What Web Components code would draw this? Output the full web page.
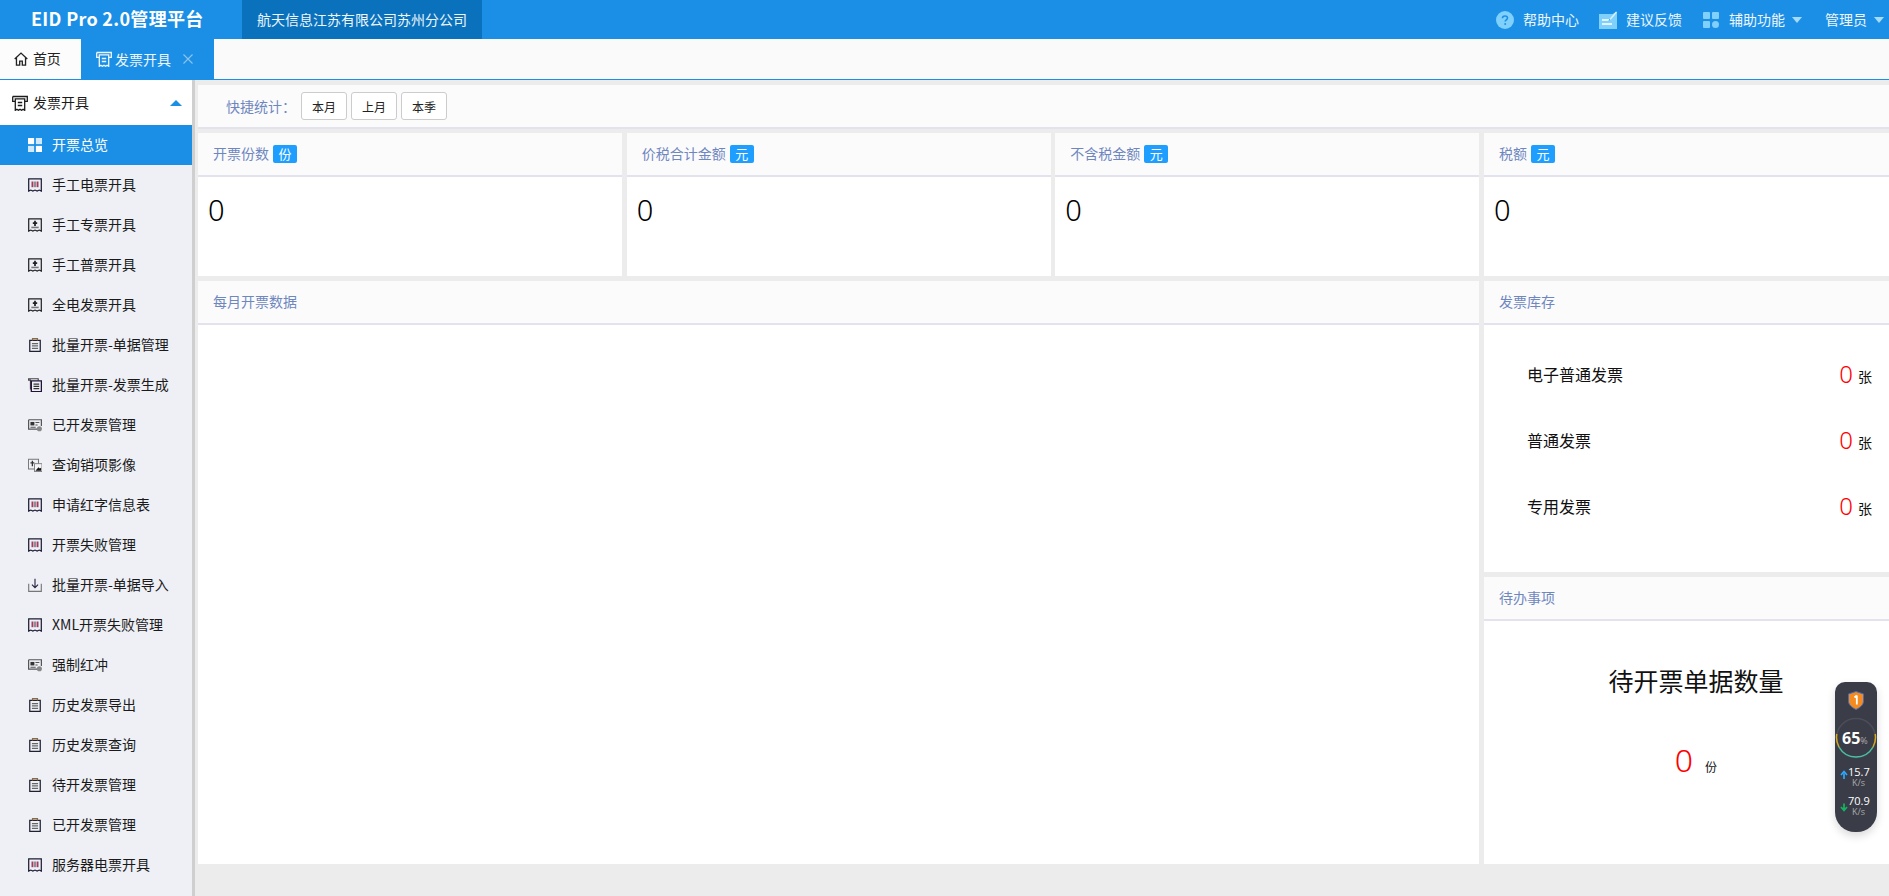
<!DOCTYPE html>
<html lang="zh">
<head>
<meta charset="utf-8">
<title>EID Pro 2.0管理平台</title>
<style>
html,body{margin:0;height:100%;overflow:hidden;}
body{font-family:"Noto Sans CJK SC","Noto Sans",sans-serif;font-size:14px;color:#000;background:#ececec;}
eid-app{height:100vh;}
</style>
</head>
<body>
<eid-app>
  <eid-topbar slot="top" title-text="EID Pro 2.0管理平台" company="航天信息江苏有限公司苏州分公司"></eid-topbar>
  <eid-tabs slot="tabs"></eid-tabs>
  <eid-sidebar slot="side" heading="发票开具">
    <eid-nav-item icon="grid" active>开票总览</eid-nav-item>
    <eid-nav-item icon="bar">手工电票开具</eid-nav-item>
    <eid-nav-item icon="stamp">手工专票开具</eid-nav-item>
    <eid-nav-item icon="stamp">手工普票开具</eid-nav-item>
    <eid-nav-item icon="stamp">全电发票开具</eid-nav-item>
    <eid-nav-item icon="clip">批量开票-单据管理</eid-nav-item>
    <eid-nav-item icon="copy">批量开票-发票生成</eid-nav-item>
    <eid-nav-item icon="card">已开发票管理</eid-nav-item>
    <eid-nav-item icon="image">查询销项影像</eid-nav-item>
    <eid-nav-item icon="bar">申请红字信息表</eid-nav-item>
    <eid-nav-item icon="bar">开票失败管理</eid-nav-item>
    <eid-nav-item icon="download">批量开票-单据导入</eid-nav-item>
    <eid-nav-item icon="bar">XML开票失败管理</eid-nav-item>
    <eid-nav-item icon="card">强制红冲</eid-nav-item>
    <eid-nav-item icon="clip">历史发票导出</eid-nav-item>
    <eid-nav-item icon="clip">历史发票查询</eid-nav-item>
    <eid-nav-item icon="clip">待开发票管理</eid-nav-item>
    <eid-nav-item icon="clip">已开发票管理</eid-nav-item>
    <eid-nav-item icon="bar">服务器电票开具</eid-nav-item>
  </eid-sidebar>
  <eid-dashboard slot="main"></eid-dashboard>
  <eid-speed slot="float"></eid-speed>
</eid-app>

<script>
// 图标都放这里，按名字取
const ICONS = {
  home:`<path d="M.8 8 8 1.200 15.200 8M2.800 6.500V15h3.700v-4.500h3V15h3.700V6.500" fill="none" stroke="currentColor" stroke-width="1.500"/>`,
  ticket:`<path d="M.7 1.500h14.600v4.800h-2.600M.7 1.500v4.800h2.600M3.300 3.800v11.500l1.600-1.100 1.500 1.100 1.600-1.100 1.600 1.100 1.500-1.100 1.600 1.100V3.800zM5.800 7.500h4.400M5.800 10.500h4.400" fill="none" stroke="currentColor" stroke-width="1.300"/>`,
  grid:`<g fill="currentColor"><rect x="0" y="0" width="7" height="7"/><rect x="9" y="0" width="7" height="7" opacity=".8"/><rect x="0" y="9" width="7" height="7" opacity=".8"/><rect x="9" y="9" width="7" height="7"/></g>`,
  bar:`<path d="M.8 1h14.400v14l-2.400-1.200-2.400 1.200-2.400-1.200-2.400 1.200-2.400-1.200-2.400 1.200z" fill="none" stroke="#1b1b35" stroke-width="1.400"/><rect x="4" y="4" width="2.200" height="6.500" fill="#a33b5c"/><rect x="6.900" y="4" width="2.200" height="6.500" fill="#8a8a94"/><rect x="9.800" y="4" width="2.200" height="6.500" fill="#a33b5c"/>`,
  stamp:`<path d="M.8 1h14.400v14l-2.400-1.200-2.400 1.200-2.400-1.200-2.400 1.200-2.400-1.200-2.400 1.200z" fill="none" stroke="#222" stroke-width="1.400"/><path d="M8 3.200v5.800M5.500 5.800h5" stroke="#222" stroke-width="2"/><path d="M3.800 10.800h8.400" stroke="#777" stroke-width="1.800"/>`,
  clip:`<path d="M2 2.800h12v12.500H2z" fill="none" stroke="#1f2030" stroke-width="1.400"/><path d="M5.200 2.800V.8h5.600v2" fill="none" stroke="#8b6a45" stroke-width="1.400"/><path d="M4.500 6.500h7M4.500 9h7M4.500 11.800h7" stroke="#666" stroke-width="1.500"/>`,
  copy:`<path d="M2.800 13V2.500H.7V.8h11v2" fill="none" stroke="#444" stroke-width="1.300"/><path d="M3.800 3.300h11.500v12.200H3.800z" fill="none" stroke="#241038" stroke-width="1.500"/><path d="M6.300 7h6.500M6.300 9.500h6.500M6.300 12.200h6.500" stroke="#333" stroke-width="1.300"/>`,
  card:`<path d="M.7 2h14.600v7M15 12.800H.7V2" fill="none" stroke="#555" stroke-width="1.400"/><rect x="2.800" y="4.500" width="4.500" height="4" fill="#333"/><path d="M8.500 5.200h4.500M8.500 8h2.500M2.800 10.600h6" stroke="#555" stroke-width="1.300"/><circle cx="13" cy="12.300" r="2.900" fill="#888"/>`,
  image:`<path d="M.5 1.500h11.500v11H.5z" fill="none" stroke="#777" stroke-width="1.200"/><path d="M5 3v6.500M2.800 5.500h4.400" stroke="#333" stroke-width="1.500"/><rect x="7.500" y="6.500" width="8.500" height="9" fill="#f5f5f8" stroke="#777"/><path d="M8.500 14.500l3.500-4 1.500 1.500 1.500-1v3.500z" fill="#111"/>`,
  download:`<path d="M.8 6.500v8.800h14.400V6.500" fill="none" stroke="#777" stroke-width="1.300"/><path d="M8 .8v10M4.500 7.500 8 11l3.500-3.500" fill="none" stroke="#2a2540" stroke-width="1.300"/>`,
  help:`<circle cx="9" cy="9" r="9" fill="#7fd0fa"/><path d="M6.500 7.200C6.500 5.700 7.600 5 9 5s2.500.8 2.500 2.100c0 1.800-2.300 1.700-2.300 3.400" fill="none" stroke="#1b8fe6" stroke-width="1.600"/><circle cx="9.200" cy="13" r="1" fill="#1b8fe6"/>`,
  note:`<path d="M0 3h13.500L18 .5V18H0z" fill="#7fd0fa"/><path d="M3 9h7M3 13h10" stroke="#fff" stroke-width="1.300"/><path d="M10 9.500 17 1.500" stroke="#1b8fe6" stroke-width="1"/><path d="M11 8.500 17.500 1" stroke="#d9f2ff" stroke-width="1.500"/>`,
  apps:`<g fill="#7fd0fa"><rect x="0" y="0" width="7" height="7" rx="1"/><rect x="9" y="0" width="7" height="7" rx="1"/><rect x="0" y="9" width="7" height="7" rx="1"/><circle cx="12.500" cy="12.500" r="3.500"/></g>`
};

class EidIcon extends HTMLElement{
  connectedCallback(){
    const size = this.getAttribute("size") || 16;
    const box = this.getAttribute("box") || 16;
    this.attachShadow({mode:"open"}).innerHTML = `
      <style>:host{display:inline-flex;flex:none;width:${size}px;height:${size}px;}svg{display:block;}</style>
      <svg width="${size}" height="${size}" viewBox="0 0 ${box} ${box}">${ICONS[this.getAttribute("name")]||""}</svg>`;
  }
}

class EidApp extends HTMLElement{
  constructor(){
    super();
    this.attachShadow({mode:"open"}).innerHTML = `
      <style>
        :host{display:grid;grid-template-columns:195px 1fr;grid-template-rows:39px 41px 1fr;position:relative;overflow:hidden;}
        .top{grid-column:1/3;display:block;}
        .tabs{grid-column:1/3;display:block;}
        .side{min-height:0;overflow:hidden;}
        .main{min-width:0;min-height:0;overflow:hidden;}
      </style>
      <div class="top"><slot name="top"></slot></div>
      <div class="tabs"><slot name="tabs"></slot></div>
      <div class="side"><slot name="side"></slot></div>
      <div class="main"><slot name="main"></slot></div>
      <slot name="float"></slot>`;
  }
}

class EidTopbar extends HTMLElement{
  connectedCallback(){
    this.attachShadow({mode:"open"}).innerHTML = `
      <style>
        :host{display:flex;height:39px;background:#1b8fe6;color:#fff;align-items:stretch;}
        .logo{width:242px;box-sizing:border-box;padding-left:31px;font-size:18px;font-weight:700;line-height:37px;letter-spacing:.3px;white-space:nowrap;}
        .org{background:#0a72bc;padding:0 15px;line-height:38px;width:210px;white-space:nowrap;color:#eef6fc;}
        .right{margin-left:auto;display:flex;align-items:center;}
        .it{display:flex;align-items:center;white-space:nowrap;line-height:37px;height:39px;color:#eef6fc;}
        .it eid-icon{margin-right:9px;}
        .caret{width:0;height:0;border:5.500px solid transparent;border-top:6px solid #a5dcf9;border-bottom:0;margin-left:7px;}
        .b{margin-left:20px;}.c{margin-left:21px;}.d{margin-left:23px;margin-right:5px;}
        .c eid-icon{margin-right:10px;}
      </style>
      <div class="logo">${this.getAttribute("title-text")}</div>
      <div class="org">${this.getAttribute("company")}</div>
      <div class="right">
        <div class="it a"><eid-icon name="help" size="18" box="18"></eid-icon>帮助中心</div>
        <div class="it b"><eid-icon name="note" size="18" box="18"></eid-icon>建议反馈</div>
        <div class="it c"><eid-icon name="apps" size="16"></eid-icon>辅助功能<span class="caret"></span></div>
        <div class="it d">管理员<span class="caret"></span></div>
      </div>`;
  }
}

class EidTabs extends HTMLElement{
  connectedCallback(){
    this.attachShadow({mode:"open"}).innerHTML = `
      <style>
        :host{display:flex;height:41px;box-sizing:border-box;background:#fafafa;border-bottom:1px solid #1b8fe6;}
        .tab{display:flex;align-items:center;line-height:20px;white-space:nowrap;}
        .home{width:81px;box-sizing:border-box;padding-left:14px;color:#222;background:#fcfcfc;}
        .home eid-icon{margin-right:5px;}
        .home span{padding-bottom:2px;letter-spacing:-.3px;}
        .on{width:133px;box-sizing:border-box;padding-left:15px;background:#1b8fe6;color:#eef6fc;}
        .on eid-icon{margin-right:3px;}
        .x{margin-left:12px;width:10px;height:10px;}
      </style>
      <div class="tab home"><eid-icon name="home" size="14"></eid-icon><span>首页</span></div>
      <div class="tab on"><eid-icon name="ticket" size="16"></eid-icon>发票开具
        <svg class="x" viewBox="0 0 10 10"><path d="M.5.500l9 9M9.500.500l-9 9" stroke="#8cc4ee" stroke-width="1.100"/></svg></div>`;
  }
}

class EidSidebar extends HTMLElement{
  connectedCallback(){
    this.attachShadow({mode:"open"}).innerHTML = `
      <style>
        :host{display:block;height:100%;box-sizing:border-box;background:#eef0f6;border-right:3px solid #cfcfcf;}
        .head{display:flex;align-items:center;height:45px;background:#fff;padding-left:12px;color:#1c1c1c;line-height:20px;}
        .head span.t{position:relative;top:-1px;}
        .head eid-icon{margin-right:5px;}
        .tri{margin-left:auto;margin-right:10px;width:0;height:0;border:6px solid transparent;border-bottom:6px solid #1b8fe6;border-top:0;}
      </style>
      <div class="head"><eid-icon name="ticket" size="16"></eid-icon><span class="t">${this.getAttribute("heading")}</span><span class="tri"></span></div>
      <slot></slot>`;
  }
}

class EidNavItem extends HTMLElement{
  connectedCallback(){
    this.attachShadow({mode:"open"}).innerHTML = `
      <style>
        :host{display:flex;align-items:center;height:40px;padding-left:28px;color:#1a1a1a;white-space:nowrap;}
        :host([active]){background:#1b8fe6;color:#fff;}
        eid-icon{margin-right:10px;width:14px;height:14px;}
        .t{padding-bottom:2px;}
      </style>
      <eid-icon name="${this.getAttribute("icon")}" size="14"></eid-icon><span class="t"><slot></slot></span>`;
  }
}

class EidPanel extends HTMLElement{
  connectedCallback(){
    const unit = this.getAttribute("unit");
    this.attachShadow({mode:"open"}).innerHTML = `
      <style>
        :host{display:flex;flex-direction:column;background:#fff;min-width:0;min-height:0;}
        .h{display:flex;align-items:center;flex:none;height:42px;background:#fbfbfc;border-bottom:2px solid #e3e3f0;padding-left:15px;color:#6f87bf;white-space:nowrap;}
        .t{padding-bottom:2px;}
        .u{margin-left:4px;background:#1e9fff;color:#fff;border-radius:2px;font-size:13px;width:24px;height:18px;line-height:17px;text-align:center;}
        .b{flex:1;min-height:0;}
      </style>
      <div class="h"><span class="t">${this.getAttribute("heading")}</span>${unit?`<span class="u">${unit}</span>`:""}</div>
      <div class="b"><slot></slot></div>`;
  }
}

class EidStat extends HTMLElement{
  connectedCallback(){
    this.attachShadow({mode:"open"}).innerHTML = `
      <style>:host{display:block;padding:11px 0 0 10px;font-size:29px;line-height:44px;color:#000;font-family:"Noto Sans",sans-serif;font-weight:300;}</style>
      <slot></slot>`;
  }
}

class EidStockRow extends HTMLElement{
  connectedCallback(){
    this.attachShadow({mode:"open"}).innerHTML = `
      <style>
        :host{display:flex;align-items:center;height:66px;padding:0 36px 0 43px;font-size:16px;color:#111;}
        .n{margin-left:auto;font-size:24px;line-height:30px;color:#f00;font-family:"Noto Sans",sans-serif;font-weight:300;}
        .z{margin-left:5px;font-size:14px;position:relative;top:2px;}
      </style>
      <slot></slot><span class="n">${this.getAttribute("count")}</span><span class="z">张</span>`;
  }
}

class EidDashboard extends HTMLElement{
  connectedCallback(){
    this.attachShadow({mode:"open"}).innerHTML = `
      <style>
        :host{display:block;height:100%;box-sizing:border-box;padding:5px 0 0 3px;overflow:hidden;}
        .quick{display:flex;align-items:center;height:42px;background:#fbfbfc;border-bottom:2px solid #e3e3ee;margin-bottom:4px;padding-left:28px;color:#6f87bf;}
        .quick span{margin-right:5px;}
        button{width:46px;height:28px;margin-right:4px;padding:0;background:#fff;border:1px solid #ccc;border-radius:3px;font:12px "Noto Sans CJK SC",sans-serif;color:#222;}
        .grid{display:grid;width:1710px;grid-template-columns:repeat(4,424px);column-gap:4.670px;row-gap:5px;grid-template-rows:143px 583px;}
        .wide{grid-column:1/4;}
        .stack{display:flex;flex-direction:column;gap:5px;min-height:0;}
        .stock{height:291px;flex:none;}
        .stock .pad{padding-top:16px;}
        .todo{flex:1;}
        .big{text-align:center;font-size:25px;line-height:36px;padding-top:41px;color:#111;}
        .cnt{text-align:center;margin-top:40px;line-height:44px;font-size:12px;color:#111;}
        .cnt b{font:300 32px "Noto Sans",sans-serif;color:#f00;margin-right:12px;}
      </style>
      <div class="quick"><span>快捷统计：</span><button>本月</button><button>上月</button><button>本季</button></div>
      <div class="grid">
        <eid-panel heading="开票份数" unit="份"><eid-stat>0</eid-stat></eid-panel>
        <eid-panel heading="价税合计金额" unit="元"><eid-stat>0</eid-stat></eid-panel>
        <eid-panel heading="不含税金额" unit="元"><eid-stat>0</eid-stat></eid-panel>
        <eid-panel heading="税额" unit="元"><eid-stat>0</eid-stat></eid-panel>
        <eid-panel class="wide" heading="每月开票数据"></eid-panel>
        <div class="stack">
          <eid-panel class="stock" heading="发票库存">
            <div class="pad">
              <eid-stock-row count="0">电子普通发票</eid-stock-row>
              <eid-stock-row count="0">普通发票</eid-stock-row>
              <eid-stock-row count="0">专用发票</eid-stock-row>
            </div>
          </eid-panel>
          <eid-panel class="todo" heading="待办事项">
            <div class="big">待开票单据数量</div>
            <div class="cnt"><b>0</b>份</div>
          </eid-panel>
        </div>
      </div>`;
  }
}

// 右下角悬浮的测速小窗，盖在内容上面
class EidSpeed extends HTMLElement{
  connectedCallback(){
    this.attachShadow({mode:"open"}).innerHTML = `
      <style>
        :host{position:absolute;left:1835px;top:682px;width:42px;height:150px;background:#3a3d47;border-radius:10px 10px 20px 20px;box-shadow:0 4px 8px rgba(0,0,0,.15);color:#fff;font-family:"Open Sans","Noto Sans",sans-serif;}
        svg{position:absolute;left:0;top:0;}
        .p{position:absolute;left:7px;top:46px;font-size:16px;font-weight:700;line-height:20px;white-space:nowrap;}
        .p small{font-size:9px;font-weight:400;color:#aaa;}
        .v{position:absolute;left:13px;font-size:11px;line-height:10px;white-space:nowrap;}
        .k{position:absolute;left:17px;font-size:9px;line-height:9px;color:#aaa;white-space:nowrap;}
      </style>
      <svg width="42" height="150" viewBox="0 0 42 150">
        <path d="M13.500 12l7.500-2.500 7.500 2.500v7c0 4-3.500 6.500-7.500 8.500-4-2-7.500-4.500-7.500-8.500z" fill="#f58a1f" stroke="#3f6fc4" stroke-width="1"/>
        <path d="M21.800 13.500v9M19.500 15.500l2.300-2" stroke="#fff" stroke-width="1.800" fill="none"/>
        <circle cx="21" cy="56" r="19.500" fill="none" stroke="#4b4e59" stroke-width="1.500"/>
        <path d="M1.800 52a19.500 19.500 0 0 0 2.200 13" fill="none" stroke="#d8a920" stroke-width="1.500"/>
        <path d="M40.200 52a19.500 19.500 0 0 1-2.200 13" fill="none" stroke="#d8a920" stroke-width="1.500"/>
        <path d="M4 65a19.500 19.500 0 0 0 34 0" fill="none" stroke="#45c2a0" stroke-width="1.500"/>
        <path d="M9 97v-5.500M6 93l3-3.500 3 3.500" fill="none" stroke="#29a9ff" stroke-width="1.700"/>
        <path d="M9 121.500v5.500M6 125l3 3.500 3-3.500" fill="none" stroke="#14b560" stroke-width="1.700"/>
      </svg>
      <div class="p">65<small>%</small></div>
      <div class="v" style="top:85px">15.7</div><div class="k" style="top:96px">K/s</div>
      <div class="v" style="top:114px">70.9</div><div class="k" style="top:125px">K/s</div>`;
  }
}

customElements.define("eid-icon",EidIcon);
customElements.define("eid-app",EidApp);
customElements.define("eid-topbar",EidTopbar);
customElements.define("eid-tabs",EidTabs);
customElements.define("eid-sidebar",EidSidebar);
customElements.define("eid-nav-item",EidNavItem);
customElements.define("eid-panel",EidPanel);
customElements.define("eid-stat",EidStat);
customElements.define("eid-stock-row",EidStockRow);
customElements.define("eid-dashboard",EidDashboard);
customElements.define("eid-speed",EidSpeed);
</script>
</body>
</html>
